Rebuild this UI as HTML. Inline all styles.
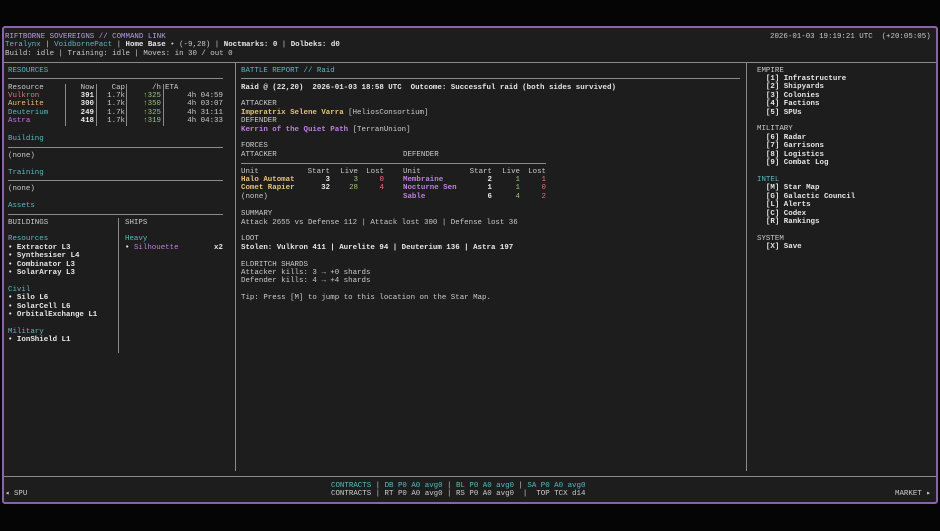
<!DOCTYPE html>
<html><head><meta charset="utf-8"><style>
html,body{margin:0;padding:0;background:#050505;}
body{width:940px;height:529px;position:relative;overflow:hidden;font-family:"Liberation Mono","DejaVu Sans Mono",monospace;font-size:7.45px;color:#cacaca;}
#frame{position:absolute;left:2px;top:26px;width:932px;height:474px;border:2px solid #8a62a6;border-radius:3px;background:#1d1d1d;}
#w{position:absolute;left:0;top:1.6px;width:940px;height:529px;}
.t{position:absolute;white-space:pre;line-height:8.4px;}
.hl{position:absolute;height:1px;background:#8a8a8a;}
.vl{position:absolute;width:1px;background:#8a8a8a;}
.c{color:#5cb8bf}.b{font-weight:bold;color:#e6e6e6}.r{color:#e5707a}.y{color:#e5c07b}.p{color:#c678dd}.g{color:#98c379}.pu{color:#c07fe0}.m{color:#b59de0}
.rt{text-align:right}
</style></head><body>
<div id="frame"></div>
<div id="w">
<!-- header -->
<div class="t m" style="left:5px;top:31px">RIFTBORNE SOVEREIGNS // COMMAND LINK</div>
<div class="t" style="left:5px;top:39.5px"><span class="c">Teralynx</span> | <span class="c">VoidbornePact</span> | <span class="b">Home Base</span> • (-9,28) | <span class="b">Noctmarks: 0</span> | <span class="b">Dolbeks: d0</span></div>
<div class="t" style="left:5px;top:48px">Build: idle | Training: idle | Moves: in 30 / out 0</div>
<div class="t" style="left:770px;top:31px">2026-01-03 19:19:21 UTC  (+20:05:05)</div>
<div class="hl" style="left:4px;top:60px;width:932px"></div>
<div class="vl" style="left:235px;top:61px;height:408px"></div>
<div class="vl" style="left:746px;top:61px;height:408px"></div>
<div class="hl" style="left:4px;top:474px;width:932px"></div>

<!-- left -->
<div class="t c" style="left:8px;top:65px">RESOURCES</div>
<div class="hl" style="left:8px;top:76px;width:215px"></div>
<div class="vl" style="left:65px;top:82px;height:42px"></div>
<div class="vl" style="left:96px;top:82px;height:42px"></div>
<div class="vl" style="left:126px;top:82px;height:42px"></div>
<div class="vl" style="left:163px;top:82px;height:42px"></div>
<div class="t" style="left:8px;top:82px">Resource<br><span class="r">Vulkron</span><br><span class="y">Aurelite</span><br><span class="c">Deuterium</span><br><span class="p">Astra</span></div>
<div class="t rt" style="left:66px;width:28px;top:82px">Now<br><span class="b">391</span><br><span class="b">300</span><br><span class="b">249</span><br><span class="b">418</span></div>
<div class="t rt" style="left:97px;width:28px;top:82px">Cap<br>1.7k<br>1.7k<br>1.7k<br>1.7k</div>
<div class="t rt" style="left:127px;width:34px;top:82px">/h<br><span class="g">↑325</span><br><span class="g">↑350</span><br><span class="g">↑325</span><br><span class="g">↑319</span></div>
<div class="t" style="left:165px;top:82px">ETA</div>
<div class="t rt" style="left:165px;width:58px;top:82px"> <br>4h 04:59<br>4h 03:07<br>4h 31:11<br>4h 04:33</div>

<div class="t c" style="left:8px;top:133px">Building</div>
<div class="hl" style="left:8px;top:145px;width:215px"></div>
<div class="t" style="left:8px;top:150px">(none)</div>
<div class="t c" style="left:8px;top:167px">Training</div>
<div class="hl" style="left:8px;top:178px;width:215px"></div>
<div class="t" style="left:8px;top:183px">(none)</div>
<div class="t c" style="left:8px;top:200px">Assets</div>
<div class="hl" style="left:8px;top:212px;width:215px"></div>
<div class="vl" style="left:118px;top:216px;height:135px"></div>
<div class="t" style="left:8px;top:217px">BUILDINGS

<span class="c">Resources</span>
<span class="b">• Extractor L3
• Synthesiser L4
• Combinator L3
• SolarArray L3</span>

<span class="c">Civil</span>
<span class="b">• Silo L6
• SolarCell L6
• OrbitalExchange L1</span>

<span class="c">Military</span>
<span class="b">• IonShield L1</span></div>
<div class="t" style="left:125px;top:217px">SHIPS

<span class="c">Heavy</span>
<span class="b">•</span> <span class="pu">Silhouette</span></div>
<div class="t b" style="left:214px;top:242.2px">x2</div>

<!-- middle -->
<div class="t c" style="left:241px;top:65px">BATTLE REPORT // Raid</div>
<div class="hl" style="left:241px;top:76px;width:499px"></div>
<div class="t" style="left:241px;top:82px"><span class="b">Raid @ (22,20)  2026-01-03 18:58 UTC  Outcome: Successful raid (both sides survived)</span>

ATTACKER
<span class="y b">Imperatrix Selene Varra</span> [HeliosConsortium]
DEFENDER
<span class="pu b">Kerrin of the Quiet Path</span> [TerranUnion]

FORCES
ATTACKER</div>
<div class="t" style="left:403px;top:149.8px">DEFENDER</div>
<div class="hl" style="left:241px;top:161px;width:305px"></div>
<div class="t" style="left:241px;top:166px">Unit
<span class="y b">Halo Automat</span>
<span class="y b">Comet Rapier</span>
(none)</div>
<div class="t rt" style="left:290px;width:40px;top:166px">Start
<span class="b">3</span>
<span class="b">32</span></div>
<div class="t rt" style="left:330px;width:28px;top:166px">Live
<span class="g">3</span>
<span class="g">28</span></div>
<div class="t rt" style="left:358px;width:26px;top:166px">Lost
<span class="r">0</span>
<span class="r">4</span></div>
<div class="t" style="left:403px;top:166px">Unit
<span class="pu b">Membraine</span>
<span class="pu b">Nocturne Sen</span>
<span class="pu b">Sable</span></div>
<div class="t rt" style="left:452px;width:40px;top:166px">Start
<span class="b">2</span>
<span class="b">1</span>
<span class="b">6</span></div>
<div class="t rt" style="left:492px;width:28px;top:166px">Live
<span class="g">1</span>
<span class="g">1</span>
<span class="g">4</span></div>
<div class="t rt" style="left:520px;width:26px;top:166px">Lost
<span class="r">1</span>
<span class="r">0</span>
<span class="r">2</span></div>
<div class="t" style="left:241px;top:208.5px">SUMMARY
Attack 2655 vs Defense 112 | Attack lost 300 | Defense lost 36

LOOT
<span class="b">Stolen: Vulkron 411 | Aurelite 94 | Deuterium 136 | Astra 197</span>

ELDRITCH SHARDS
Attacker kills: 3 → +0 shards
Defender kills: 4 → +4 shards

Tip: Press [M] to jump to this location on the Star Map.</div>

<!-- right -->
<div class="t" style="left:757px;top:65px">EMPIRE
<span class="b">  [1] Infrastructure
  [2] Shipyards
  [3] Colonies
  [4] Factions
  [5] SPUs</span>

MILITARY
<span class="b">  [6] Radar
  [7] Garrisons
  [8] Logistics
  [9] Combat Log</span>

<span class="c">INTEL</span>
<span class="b">  [M] Star Map
  [G] Galactic Council
  [L] Alerts
  [C] Codex
  [R] Rankings</span>

SYSTEM
<span class="b">  [X] Save</span></div>

<!-- footer -->
<div class="t" style="left:331px;top:480px"><span class="c">CONTRACTS</span> | <span class="c">DB P0 A0 avg0</span> | <span class="c">BL P0 A0 avg0</span> | <span class="c">SA P0 A0 avg0</span>
CONTRACTS | RT P0 A0 avg0 | RS P0 A0 avg0  |  TOP TCX d14</div>
<div class="t" style="left:5px;top:488.4px">◂ SPU</div>
<div class="t" style="left:895px;top:488.4px">MARKET ▸</div>
</div>
</body></html>
